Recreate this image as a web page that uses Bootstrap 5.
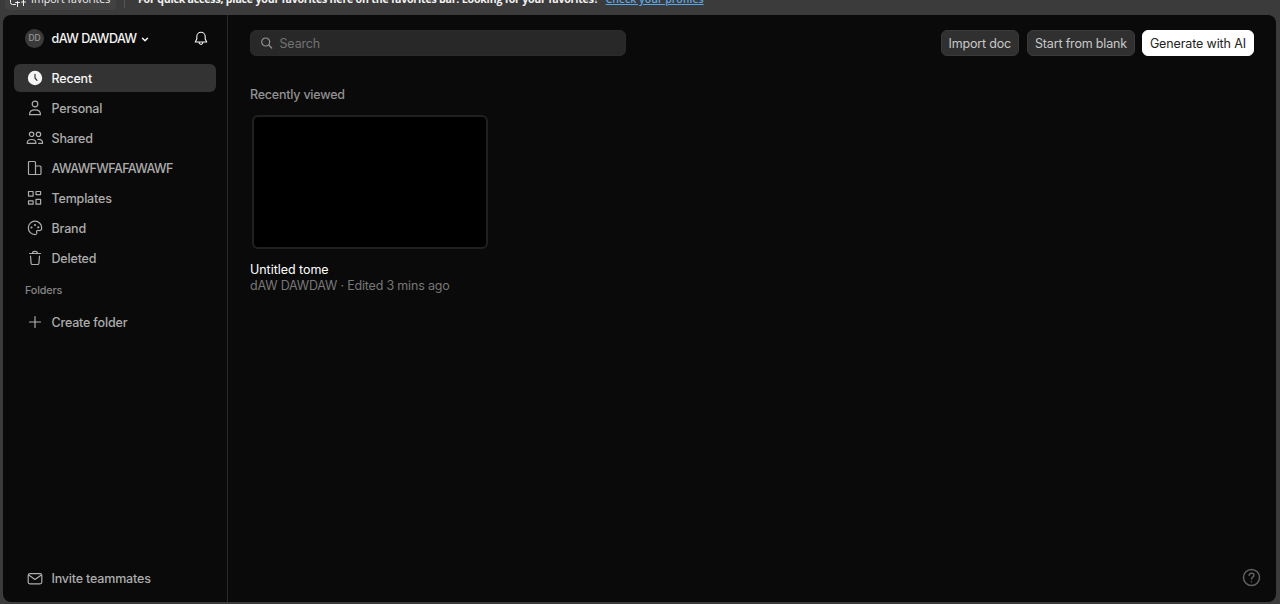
<!DOCTYPE html>
<html lang="en">
<head>
<meta charset="utf-8">
<meta name="viewport" content="width=device-width, initial-scale=1">
<title>Recent</title>
<link href="https://cdn.jsdelivr.net/npm/bootstrap@5.3.0/dist/css/bootstrap.min.css" rel="stylesheet">
<style>
html,body{height:100%}
body{background:#3b3b3b;font-family:Inter,"Liberation Sans",sans-serif;font-size:12.5px;letter-spacing:-.15px;line-height:16px;color:#b3b3b3}
svg{display:block;flex:none;fill:none;stroke:currentColor;stroke-linecap:round;stroke-linejoin:round}
.favbar{height:15px;font:10.6px/16px "Open Sans","Noto Sans",sans-serif;letter-spacing:0;color:#f2f2f2;white-space:nowrap}
.favrow{margin-top:-12px;height:22px}
.fav-import{width:111px;height:22px;margin-left:5px;padding-left:4px;background:#424242;border-radius:4px}
.favtip{font-weight:700;letter-spacing:-.2px;margin-left:13px}
.favsep{width:1px;height:18px;background:#555;margin-left:8px}
.favlink{font-weight:600;color:#5ba7e6;margin-left:7px;letter-spacing:-.02px}
.shell{height:587px;margin:0 4px 2px 3px;background:#0a0a0a;border-radius:8px}
.side{width:225px;border-right:1px solid #2a2a2a;padding:9px 11px 0 11px}
.account{height:28px;padding:0 7.5px 0 11px;color:#f5f5f5;font-weight:500;margin-bottom:12px}
.account-name{margin-left:7.5px;padding-top:2px;letter-spacing:-.5px}
.avatar{width:19px;height:19px;border-radius:50%;background:#3a3a3a;color:#969696;font-size:8.5px}
.side .nav-link{height:28px;padding:2px 0 0 11.5px;margin-bottom:2px;gap:8px;color:#adadad;font-weight:500;border-radius:6px;white-space:nowrap;letter-spacing:-.18px}
.side .nav-link.active{background:#333;color:#f5f5f5}
.side .nav-link svg{width:18px;height:18px;margin-bottom:2px}
.side .nav-link .team-name{letter-spacing:-.6px}
.folders{font-size:10.8px;font-weight:500;color:#858585;padding:1px 0 0 11px;margin:8px 0 9px}
.workspace{padding:15px 22px 0 22px}
.search{width:376px;height:26px;background:#282828;border-radius:6px;padding-left:10px;gap:6.5px;color:#737373;border:1px solid #2b2b2b}
.search span{padding-top:2px}
.act{height:26px;padding:5px 7px 3px;margin-left:8px;font-size:12.5px;letter-spacing:-.18px;line-height:16px;border-radius:6px;background:#303030;color:#c9c9c9;border:1px solid #3a3a3a;white-space:nowrap}
.act-main{background:#fff;color:#222;border-color:#fff;letter-spacing:-.12px;margin-left:7px}
.heading{font-size:12.5px;letter-spacing:-.22px;color:#929292;margin:31px 0 12px}
.thumb{width:236px;height:134px;border:2px solid #202020;border-radius:6px;background:#000;margin:0 0 13px 2px}
.doc-name{letter-spacing:-.04px}
.doc-meta{letter-spacing:-.19px;color:#777}
.help{color:#606060;right:15px;bottom:15px}
</style>
</head>
<body class="overflow-hidden">
<header class="favbar overflow-hidden">
  <div class="favrow d-flex align-items-center">
    <div class="fav-import d-flex align-items-center gap-1">
      <svg width="18" height="16" viewBox="0 0 18 16"><path d="M6.500 13.500H3.500Q1.500 13.500 1.500 11.500V3M8.500 10.500v5M6.500 11.500h4M12.500 11h4M14.500 8v6.500"/></svg>
      <span>Import favorites</span>
    </div>
    <div class="favsep"></div>
    <span class="favtip">For quick access, place your favorites here on the favorites bar. Looking for your favorites?</span>
    <a class="favlink" href="#">Check your profiles</a>
  </div>
</header>
<div class="shell d-flex position-relative overflow-hidden">
  <aside class="side d-flex flex-column flex-shrink-0">
    <div class="account d-flex align-items-center">
      <span class="avatar d-flex align-items-center justify-content-center">DD</span>
      <span class="account-name">dAW DAWDAW</span>
      <svg class="ms-1 mt-1" width="8" height="8" viewBox="0 0 8 8" stroke-width="1.5"><path d="m1.500 2.300 2.500 2.500 2.500-2.500"/></svg>
      <svg class="ms-auto" width="16" height="16" viewBox="0 0 16 16" stroke-width="1.1"><path d="M3.800 6.500a4.200 4.200 0 0 1 8.400 0V9l1.500 3H2.300l1.500-3zM6 12.200q.2 2.200 2 2.200t2-2.200"/></svg>
    </div>
    <nav class="nav flex-column flex-nowrap">
      <a class="nav-link active d-flex align-items-center" href="#"><svg viewBox="0 0 18 18"><circle cx="9" cy="9" r="7.2" fill="#f5f5f5" stroke="none"/><path d="M9 5.300V9l2 2.400" stroke="#333" stroke-width="1.2"/></svg>Recent</a>
      <a class="nav-link d-flex align-items-center" href="#"><svg viewBox="0 0 18 18" stroke-width="1.2"><circle cx="9" cy="5" r="2.8"/><path d="M3.500 15.700c0-3 2-4.800 5.500-4.800s5.500 1.800 5.500 4.800z"/></svg>Personal</a>
      <a class="nav-link d-flex align-items-center" href="#"><svg viewBox="0 0 18 18" stroke-width="1.2"><circle cx="5.600" cy="5.300" r="2.200"/><circle cx="12.500" cy="5.300" r="2.200"/><path d="M1.200 14.300c0-2.400 1.600-3.800 4.400-3.800s4.400 1.400 4.400 3.800zM12 10.400c3.300-.2 4.600 1.200 4.600 3.900h-4"/></svg>Shared</a>
      <a class="nav-link d-flex align-items-center" href="#"><svg viewBox="0 0 18 18" stroke-width="1.2"><path d="M9.500 15.500h-6q-1 0-1-1v-11q0-1 1-1H8.500q1 0 1 1zV7H14q1 0 1 1v6.500q0 1-1 1H9.500M9.500 7H14"/></svg><span class="team-name">AWAWFWFAFAWAWF</span></a>
      <a class="nav-link d-flex align-items-center" href="#"><svg viewBox="0 0 18 18" stroke-width="1.2"><path d="M2.500 2.500h4.600v4.600H2.500zM10 2.500h4.600v3.100H10zM2.500 11.900h4.600v3.300H2.500zM10 10.300h4.600v4.900H10z"/></svg>Templates</a>
      <a class="nav-link d-flex align-items-center" href="#"><svg viewBox="0 0 18 18" stroke-width="1.2"><path d="M9 15.600A6.700 6.700 0 1 1 15.700 9c0 2.300-1.500 2.700-3.200 2.500-1.600-.2-2.300.7-1.800 2 .4 1.200-.3 2.100-1.700 2.100z"/><g fill="currentColor" stroke="none"><circle cx="5.500" cy="8.500" r="1.100"/><circle cx="9" cy="6" r="1.100"/><circle cx="12.300" cy="8.300" r="1.100"/></g></svg>Brand</a>
      <a class="nav-link d-flex align-items-center" href="#"><svg viewBox="0 0 18 18" stroke-width="1.2"><path d="M3.500 4.500h11M6.500 4.300q0-2 2.500-2t2.500 2M4.500 7l.6 7.200q.1 1.300 1.400 1.300h5q1.300 0 1.400-1.300L13.500 7"/></svg>Deleted</a>
    </nav>
    <div class="folders">Folders</div>
    <nav class="nav flex-column"><a class="nav-link d-flex align-items-center" href="#"><svg viewBox="0 0 18 18" stroke-width="1.2"><path d="M9 3.500v11M3.500 9h11"/></svg>Create folder</a></nav>
    <nav class="nav flex-column mt-auto pb-2"><a class="nav-link d-flex align-items-center" href="#"><svg class="mb-0" viewBox="0 0 18 18" stroke-width="1.2"><rect x="2.200" y="3.600" width="13.600" height="10.200" rx="1.800"/><path d="m2.700 5 6.300 4.400L15.300 5"/></svg>Invite teammates</a></nav>
  </aside>
  <main class="workspace flex-grow-1">
    <div class="d-flex align-items-center">
      <div class="search d-flex align-items-center"><svg width="12" height="12" viewBox="0 0 12 12" stroke-width="1.2" style="color:#939393"><circle cx="4.700" cy="5" r="4"/><path d="m7.700 8 3 3"/></svg><span>Search</span></div>
      <div class="d-flex ms-auto">
        <button class="btn act">Import doc</button>
        <button class="btn act">Start from blank</button>
        <button class="btn act act-main">Generate with AI</button>
      </div>
    </div>
    <h1 class="heading lh-sm">Recently viewed</h1>
    <article>
      <div class="thumb"></div>
      <div class="text-white doc-name">Untitled tome</div>
      <div class="doc-meta">dAW DAWDAW · Edited 3 mins ago</div>
    </article>
  </main>
  <svg class="help position-absolute" width="19" height="19" viewBox="0 0 19 19" stroke-width="1.5"><circle cx="9.500" cy="9.500" r="8"/><path d="M7.200 7.500c0-3 4.700-2.900 4.700-.1 0 1.700-2.400 1.900-2.400 3.700M9.500 13.700v.1"/></svg>
</div>
<script src="https://cdn.jsdelivr.net/npm/bootstrap@5.3.0/dist/js/bootstrap.bundle.min.js"></script>
</body>
</html>
